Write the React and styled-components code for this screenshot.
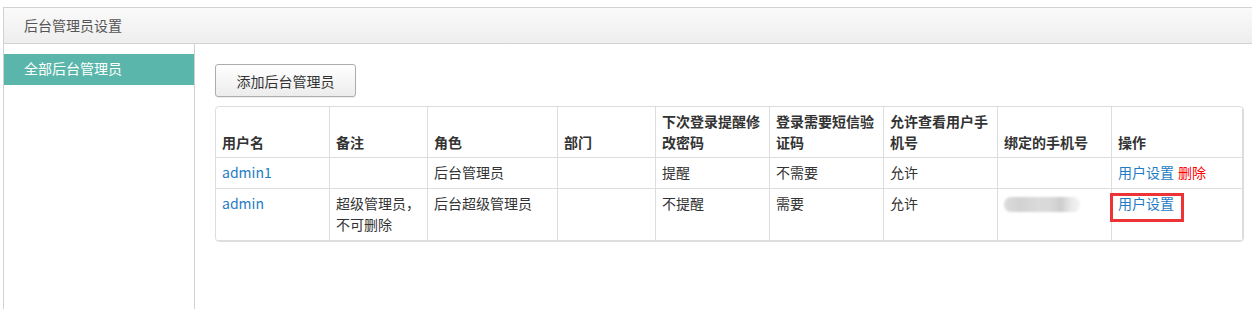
import React from "react";
import styled, { createGlobalStyle } from "styled-components";

const Global = createGlobalStyle`
  html, body { margin: 0; padding: 0; background: #fff; overflow: hidden; }
  body { font-family: "Noto Sans CJK SC", "Microsoft YaHei", sans-serif; font-size: 14px; color: #333; }
`;

const Panel = styled.div`
  margin: 7px 0 0 3px;
  width: 1270px;
  border: 1px solid #d2d2d2;
  border-right: none;
  border-bottom: none;
  height: 302px;
  box-sizing: border-box;
  display: flex;
  flex-direction: column;
`;

const Header = styled.div`
  height: 35px;
  line-height: 35px;
  padding-left: 20px;
  background: linear-gradient(to bottom, #fafafa, #eeeeee);
  border-bottom: 1px solid #d2d2d2;
  color: #555;
  font-size: 14px;
`;

const Body = styled.div`
  display: flex;
  flex: 1;
`;

const Sidebar = styled.div`
  width: 190px;
  border-right: 1px solid #d2d2d2;
  padding-top: 10px;
`;

const NavItem = styled.div`
  height: 31px;
  line-height: 29px;
  padding-left: 20px;
  background: ${(p) => (p.$active ? "#5ab6ab" : "transparent")};
  color: ${(p) => (p.$active ? "#fff" : "#333")};
`;

const Content = styled.div`
  padding: 20px 0 0 20px;
`;

const Button = styled.button`
  width: 141px;
  height: 33px;
  border: 1px solid #adadad;
  border-radius: 3px;
  background: linear-gradient(to bottom, #ffffff, #ececec);
  box-shadow: 0 1px 1px rgba(0, 0, 0, 0.08);
  font-family: inherit;
  font-size: 14px;
  color: #333;
  padding: 0;
  cursor: pointer;
`;

const TableWrap = styled.div`
  margin-top: 9px;
  width: 1027px;
  border: 1px solid #dddddd;
  border-radius: 4px;
  overflow: hidden;
`;

const Table = styled.table`
  border-collapse: collapse;
  table-layout: fixed;
  width: 1027px;
  margin: -1px 0 0 -1px;
`;

const Th = styled.th`
  border: 1px solid #dddddd;
  padding: 4px 7px 4px 6px;
  line-height: 21px;
  font-weight: bold;
  text-align: left;
  vertical-align: bottom;
  color: #333;
`;

const Td = styled.td`
  border: 1px solid #dddddd;
  padding: 4px 5px 5px 6px;
  line-height: 21px;
  vertical-align: top;
  color: #333;
  position: relative;
  white-space: ${(p) => (p.$nowrap ? "nowrap" : "normal")};
`;

const Link = styled.a`
  color: ${(p) => (p.$danger ? "#ff0000" : "#1f7cc4")};
  text-decoration: none;
  margin-right: 4px;
`;

const Blurred = styled.div`
  width: 76px;
  height: 15px;
  margin-top: 4px;
  border-radius: 7px;
  background: linear-gradient(
    to right,
    #dcdcdc 0%,
    #d2d2d2 20%,
    #dadada 45%,
    #d9d9d9 60%,
    #cdcdcd 75%,
    #e9e9e9 88%,
    #f3f3f3 100%
  );
  filter: blur(1px);
`;

const Highlight = styled.div`
  position: absolute;
  left: -2px;
  top: 4px;
  width: 68px;
  height: 23px;
  border: 3px solid #ee3336;
  pointer-events: none;
`;

const cols = [114, 98, 130, 98, 114, 114, 114, 114, 131];
const heads = [
  "用户名",
  "备注",
  "角色",
  "部门",
  "下次登录提醒修改密码",
  "登录需要短信验证码",
  "允许查看用户手机号",
  "绑定的手机号",
  "操作",
];

export default function App() {
  return (
    <>
      <Global />
      <Panel>
        <Header>后台管理员设置</Header>
        <Body>
          <Sidebar>
            <NavItem $active>全部后台管理员</NavItem>
          </Sidebar>
          <Content>
            <Button>添加后台管理员</Button>
            <TableWrap>
              <Table>
                <colgroup>
                  {cols.map((w, i) => (
                    <col key={i} style={{ width: w }} />
                  ))}
                </colgroup>
                <thead>
                  <tr>
                    {heads.map((h) => (
                      <Th key={h}>{h}</Th>
                    ))}
                  </tr>
                </thead>
                <tbody>
                  <tr>
                    <Td><Link>admin1</Link></Td>
                    <Td></Td>
                    <Td>后台管理员</Td>
                    <Td></Td>
                    <Td>提醒</Td>
                    <Td>不需要</Td>
                    <Td>允许</Td>
                    <Td></Td>
                    <Td>
                      <Link>用户设置</Link>
                      <Link $danger>删除</Link>
                    </Td>
                  </tr>
                  <tr>
                    <Td><Link>admin</Link></Td>
                    <Td $nowrap>
                      超级管理员，
                      <br />
                      不可删除
                    </Td>
                    <Td>后台超级管理员</Td>
                    <Td></Td>
                    <Td>不提醒</Td>
                    <Td>需要</Td>
                    <Td>允许</Td>
                    <Td><Blurred /></Td>
                    <Td>
                      <Link>用户设置</Link>
                      <Highlight />
                    </Td>
                  </tr>
                </tbody>
              </Table>
            </TableWrap>
          </Content>
        </Body>
      </Panel>
    </>
  );
}
